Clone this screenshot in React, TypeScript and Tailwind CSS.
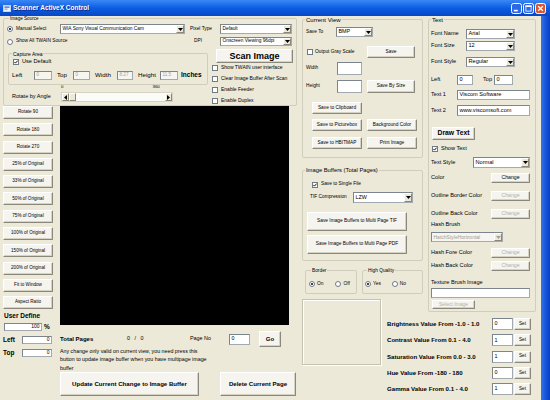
import React from "react";

type Kids = { children?: React.ReactNode; className?: string };

function Btn({ children, className = "", disabled = false }: Kids & { disabled?: boolean }) {
  return (
    <div
      className={`flex shrink-0 items-center justify-center whitespace-nowrap rounded-[1px] border border-t-[#FFFFFF] border-l-[#FFFFFF] border-r-[#8A877B] border-b-[#8A877B] bg-[#F5F4EF] shadow-[inset_-1px_-1px_0_#D5D2C3] ${
        disabled ? "text-[#B4B1A3]" : "text-black"
      } ${className}`}
    >
      {children}
    </div>
  );
}

function Field({
  value = "",
  className = "",
  right = false,
  disabled = false,
}: {
  value?: string;
  className?: string;
  right?: boolean;
  disabled?: boolean;
}) {
  return (
    <div
      className={`flex shrink-0 items-center overflow-hidden whitespace-nowrap border border-[#A3A9B1] border-t-[#7C848D] border-l-[#7C848D] px-[1.5px] ${
        disabled ? "bg-[#F6F5F0] text-[#A3A092]" : "bg-white"
      } ${right ? "justify-end" : ""} ${className}`}
    >
      {value}
    </div>
  );
}

function Drop({ value, className = "", disabled = false }: { value: string; className?: string; disabled?: boolean }) {
  return (
    <div
      className={`flex shrink-0 items-stretch border border-[#A3A9B1] border-t-[#7C848D] border-l-[#7C848D] ${
        disabled ? "bg-[#F6F5F0] text-[#A3A092]" : "bg-white"
      } ${className}`}
    >
      <div className="flex flex-1 items-center overflow-hidden whitespace-nowrap pl-[1.5px]">{value}</div>
      <div className="flex w-[8px] items-center justify-center border border-t-[#FFFFFF] border-l-[#FFFFFF] border-r-[#8A877B] border-b-[#8A877B] bg-[#ECE9D8]">
        <svg width="5" height="3" viewBox="0 0 5 3">
          <path d="M0 0H5L2.5 3Z" fill={disabled ? "#A3A092" : "#000"} />
        </svg>
      </div>
    </div>
  );
}

function Check({ checked = false, className = "" }: { checked?: boolean; className?: string }) {
  return (
    <div className={`flex h-[6px] w-[6px] shrink-0 items-center justify-center border border-[#6F7A86] bg-white ${className}`}>
      {checked && (
        <svg width="4" height="4" viewBox="0 0 4 4">
          <path d="M0.3 1.9L1.5 3.1L3.7 0.6" fill="none" stroke="#111" strokeWidth="1" />
        </svg>
      )}
    </div>
  );
}

function Radio({ checked = false, className = "" }: { checked?: boolean; className?: string }) {
  return (
    <div
      className={`flex h-[6px] w-[6px] shrink-0 items-center justify-center rounded-full border border-[#6F7A86] bg-white ${className}`}
    >
      {checked && <div className="h-[2px] w-[2px] rounded-full bg-black" />}
    </div>
  );
}

function Group({
  title,
  children,
  className = "",
  titleClass = "",
}: Kids & { title: string; titleClass?: string }) {
  return (
    <div className={`relative shrink-0 rounded-[2px] border border-[#D0CDBD] ${className}`}>
      <span className={`absolute top-0 -translate-y-1/2 whitespace-nowrap bg-[#ECE9D8] px-[1px] leading-none ${titleClass}`}>
        {title}
      </span>
      {children}
    </div>
  );
}

function Arrow({ dir }: { dir: "l" | "r" }) {
  return (
    <div className="flex w-[7px] items-center justify-center border border-t-[#FFFFFF] border-l-[#FFFFFF] border-r-[#8A877B] border-b-[#8A877B] bg-[#ECE9D8]">
      <svg width="3" height="5" viewBox="0 0 3 5">
        <path d={dir === "l" ? "M3 0V5L0 2.5Z" : "M0 0V5L3 2.5Z"} fill="#000" />
      </svg>
    </div>
  );
}

function HScroll({ className = "" }: { className?: string }) {
  return (
    <div className={`flex shrink-0 border border-[#D6D3C6] bg-[#FBFBF8] ${className}`}>
      <Arrow dir="l" />
      <div className="w-[7px] border border-t-[#FFFFFF] border-l-[#FFFFFF] border-r-[#8A877B] border-b-[#8A877B] bg-[#ECE9D8]" />
      <div className="flex-1" />
      <Arrow dir="r" />
    </div>
  );
}

function CapButton({ kind }: { kind: "min" | "max" | "close" }) {
  const fill = kind === "close" ? "#DD5630" : "#2D68E6";
  return (
    <svg width="11" height="11" viewBox="0 0 11 11">
      <rect x="0.5" y="0.5" width="10" height="10" rx="2" fill={fill} stroke="#FFFFFF" />
      {kind === "min" && <rect x="2.8" y="6.8" width="4" height="1.6" fill="#FFFFFF" />}
      {kind === "max" && (
        <g>
          <rect x="2.9" y="2.9" width="5.2" height="5.2" fill="none" stroke="#FFFFFF" strokeWidth="0.8" />
          <rect x="2.5" y="2.5" width="6" height="1.5" fill="#FFFFFF" />
        </g>
      )}
      {kind === "close" && <path d="M3.2 3.2L7.8 7.8M7.8 3.2L3.2 7.8" stroke="#FFFFFF" strokeWidth="1.3" />}
    </svg>
  );
}

const SIDE = [
  "Rotate 90",
  "Rotate 180",
  "Rotate 270",
  "25% of Original",
  "33% of Original",
  "50% of Original",
  "75% of Original",
  "100% of Original",
  "150% of Original",
  "200% of Original",
  "Fit to Window",
  "Aspect Ratio",
];

const ADJUST = [
  ["Brightness Value From -1.0 - 1.0", "0"],
  ["Contrast Value From 0.1 - 4.0", "1"],
  ["Saturation Value From 0.0 - 3.0", "1"],
  ["Hue Value From -180 - 180", "0"],
  ["Gamma Value From 0.1 - 4.0", "1"],
];

function ColorRow({ label, disabled = false, className = "" }: { label: string; disabled?: boolean; className?: string }) {
  return (
    <div className={`flex h-[10px] items-center ${className}`}>
      <span className="ml-[2px] w-[60px]">{label}</span>
      <Btn disabled={disabled} className="h-[10px] w-[39px] text-[5.2px]">
        Change
      </Btn>
    </div>
  );
}

export default function App() {
  return (
    <div className="flex h-[400px] w-[550px] flex-col overflow-hidden bg-[#ECE9D8] font-['Liberation_Sans',Arial,sans-serif] leading-none text-black">
      {/* caption */}
      <div className="flex h-[16px] shrink-0 items-center bg-linear-to-b from-[#3A87F4] via-[#0A5DE4] to-[#0847C4]">
        <svg className="ml-[3px]" width="8" height="7" viewBox="0 0 8 7">
          <rect x="0.5" y="0.5" width="7" height="6" fill="#F2F2F2" stroke="#C8D4E8" />
          <rect x="1.5" y="1.5" width="5" height="1.2" fill="#2B5FC8" />
          <rect x="1.5" y="3.6" width="3" height="1" fill="#7A8FB8" />
        </svg>
        <span className="ml-[2px] text-[6.5px] font-bold text-white [text-shadow:1px_1px_0_#0A2A8A]">Scanner ActiveX Control</span>
        <div className="flex-1" />
        <div className="mr-[4px] flex gap-[1px]">
          <CapButton kind="min" />
          <CapButton kind="max" />
          <CapButton kind="close" />
        </div>
      </div>

      <div className="flex flex-1">
        <div className="flex flex-1">
          {/* left area */}
          <div className="flex w-[298px] shrink-0 flex-col text-[4.8px]">
            <Group title="Image Source" className="ml-[3px] mt-[2px] flex h-[88px] w-[294px] flex-col" titleClass="left-[5px] text-[4.6px]">
              <div className="mt-[5px] flex h-[10px] items-center">
                <div className="flex w-[56px] items-center pl-[3px]">
                  <Radio checked />
                  <span className="ml-[3px]">Manual Select</span>
                </div>
                <Drop value="WIA Sony Visual Communication Cam" className="h-[10px] w-[125px]" />
                <span className="ml-[5px] w-[30px]">Pixel Type</span>
                <Drop value="Default" className="h-[10px] w-[72px]" />
              </div>
              <div className="mt-[3px] flex h-[9px] items-center">
                <div className="flex w-[189px] items-center pl-[3px]">
                  <Radio />
                  <span className="ml-[3px]">Show All TWAIN Source</span>
                </div>
                <span className="w-[27px] pl-[1px]">DPI</span>
                <Drop value="Onscreen Viewing 96dpi" className="h-[9px] w-[72px]" />
              </div>
              <div className="flex">
                <div className="flex w-[208px] flex-col">
                  <Group title="Capture Area" className="ml-[4px] mt-[7px] flex h-[32px] w-[200px] flex-col" titleClass="left-[3px] text-[5px]">
                    <div className="mt-[4px] flex h-[7px] items-center pl-[4px]">
                      <Check checked />
                      <span className="ml-[3px] text-[5.6px]">Use Default</span>
                    </div>
                    <div className="mt-[6px] flex h-[9px] items-center pl-[3px] text-[6.2px]">
                      <span className="w-[22px]">Left</span>
                      <Field value="0" disabled className="h-[9px] w-[18px] text-[4.6px]" />
                      <span className="ml-[5px] w-[16px]">Top</span>
                      <Field value="0" disabled className="h-[9px] w-[17px] text-[4.6px]" />
                      <span className="ml-[5px] w-[22px]">Width</span>
                      <Field value="8.27" disabled className="h-[9px] w-[16px] text-[4.6px]" />
                      <span className="ml-[5px] w-[22px]">Height</span>
                      <Field value="11.5" disabled className="h-[9px] w-[18px] text-[4.6px]" />
                      <span className="ml-[3px] text-[6.5px] font-bold">Inches</span>
                    </div>
                  </Group>
                  <div className="flex h-[5px] items-center text-[4.4px]">
                    <span className="ml-[57px]">0</span>
                    <span className="ml-[89px]">360</span>
                  </div>
                  <div className="mt-[2px] flex h-[10px] items-center">
                    <span className="ml-[8px] w-[49px] text-[5.5px]">Rotate by Angle</span>
                    <HScroll className="h-[10px] w-[112px]" />
                  </div>
                </div>
                <div className="flex flex-col">
                  <Btn className="ml-[4px] mt-[3px] h-[14px] w-[77px] text-[9px] font-bold">Scan Image</Btn>
                  <div className="flex flex-col gap-[2px]">
                    {["Show TWAIN user interface", "Clear Image Buffer After Scan", "Enable Feeder", "Enable Duplex"].map((s) => (
                      <div key={s} className="flex h-[9px] items-center">
                        <Check />
                        <span className="ml-[3px] text-[5px]">{s}</span>
                      </div>
                    ))}
                  </div>
                </div>
              </div>
            </Group>

            <div className="flex">
              <div className="ml-[3px] flex w-[50px] shrink-0 flex-col">
                <div className="flex flex-col gap-[4.3px] text-[4.6px]">
                  {SIDE.map((s) => (
                    <Btn key={s} className="h-[13px] w-[50px]">
                      {s}
                    </Btn>
                  ))}
                </div>
                <span className="ml-[1px] mt-[4px] text-[6.5px] font-bold">User Define</span>
                <div className="mt-[3px] flex h-[8px] items-center">
                  <Field value="100" right className="ml-[1px] h-[8px] w-[38px] text-[5px]" />
                  <span className="ml-[2px] text-[6.5px] font-bold">%</span>
                </div>
                <div className="mt-[5px] flex h-[8px] items-center text-[6.5px] font-bold">
                  <span className="w-[19px]">Left</span>
                  <Field value="0" right className="h-[8px] w-[30px] text-[5px] font-normal" />
                </div>
                <div className="mt-[5px] flex h-[8px] items-center text-[6.5px] font-bold">
                  <span className="w-[19px]">Top</span>
                  <Field value="0" right className="h-[8px] w-[30px] text-[5px] font-normal" />
                </div>
              </div>

              <div className="ml-[7px] flex w-[236px] shrink-0 flex-col text-[5.3px]">
                <div className="h-[219px] w-[229px] bg-black" />
                <div className="mt-[6px] flex h-[16px] items-center">
                  <span className="w-[67px] text-[6px] font-bold">Total Pages</span>
                  <span className="w-[63px] whitespace-pre text-[5.4px]">0   /   0</span>
                  <span className="w-[39px] text-[5.4px]">Page No</span>
                  <Field value="0" className="h-[11px] w-[21px]" />
                  <Btn className="ml-[9px] h-[16px] w-[22px] text-[6px] font-bold">Go</Btn>
                </div>
                <p className="leading-[8.3px]">
                  Any change only valid on current view, you need press this
                  <br />
                  button to update image buffer when you have multipage image
                  <br />
                  buffer
                </p>
                <div className="flex h-[24px]">
                  <Btn className="h-[24px] w-[139px] text-[6.1px] font-bold">Update Current Change to Image Buffer</Btn>
                  <Btn className="ml-[21px] h-[24px] w-[76px] text-[6.1px] font-bold">Delete Current Page</Btn>
                </div>
              </div>
            </div>
          </div>

          {/* middle and right area */}
          <div className="ml-[4px] grid grid-cols-[85px_41px_108px] grid-rows-[283px_13px_88px]">
            <div className="col-span-2 col-start-1 row-start-1 flex w-[121px] flex-col text-[4.8px]">
              <Group title="Current View" className="mt-[3px] flex h-[139px] w-[121px] flex-col" titleClass="left-[2px] text-[6px]">
                <div className="mt-[7px] flex h-[10px] items-center">
                  <span className="ml-[3px] w-[30px]">Save To</span>
                  <Drop value="BMP" className="h-[10px] w-[37px] text-[5.4px]" />
                </div>
                <div className="mt-[9px] flex h-[12px] items-center">
                  <div className="flex w-[64px] items-center pl-[4px]">
                    <Check />
                    <span className="ml-[2px]">Output Gray Scale</span>
                  </div>
                  <Btn className="h-[12px] w-[48px]">Save</Btn>
                </div>
                <div className="mt-[4px] flex h-[13px] items-center">
                  <span className="ml-[3px] w-[31px]">Width</span>
                  <Field className="h-[13px] w-[25px]" />
                </div>
                <div className="mt-[4px] flex h-[14px] items-center">
                  <span className="ml-[3px] w-[31px]">Height</span>
                  <Field className="h-[13px] w-[25px]" />
                  <Btn className="ml-[5px] h-[13px] w-[48px]">Save By Size</Btn>
                </div>
                <div className="mt-[9px] flex h-[12px] items-center">
                  <Btn className="ml-[9px] h-[12px] w-[50px]">Save to Clipboard</Btn>
                </div>
                <div className="mt-[5px] flex h-[12px] items-center">
                  <Btn className="ml-[9px] h-[12px] w-[50px]">Save to Picturebox</Btn>
                  <Btn className="ml-[5px] h-[12px] w-[50px]">Background Color</Btn>
                </div>
                <div className="mt-[6px] flex h-[12px] items-center">
                  <Btn className="ml-[9px] h-[12px] w-[50px]">Save to HBITMAP</Btn>
                  <Btn className="ml-[5px] h-[12px] w-[50px]">Print Image</Btn>
                </div>
              </Group>

              <Group title="Image Buffers (Total Pages)" className="mt-[12px] flex h-[91px] w-[121px] flex-col" titleClass="left-[2px] text-[5.8px]">
                <div className="mt-[10px] flex h-[7px] items-center pl-[9px]">
                  <Check checked />
                  <span className="ml-[3px]">Save to Single File</span>
                </div>
                <div className="mt-[4px] flex h-[11px] items-center">
                  <span className="ml-[7px] w-[43px]">TIF Compression</span>
                  <Drop value="LZW" className="h-[11px] w-[60px] text-[5.4px]" />
                </div>
                <Btn className="ml-[4px] mt-[9px] h-[19px] w-[100px]">Save Image Buffers to Multi Page TIF</Btn>
                <Btn className="ml-[4px] mt-[4px] h-[19px] w-[100px]">Save Image Buffers to Multi Page PDF</Btn>
              </Group>

              <div className="mt-[9px] flex h-[24px]">
                <Group title="Border" className="ml-[3px] flex h-[24px] w-[52px] flex-col" titleClass="left-[5px] text-[4.8px]">
                  <div className="mt-[9px] flex h-[8px] items-center">
                    <Radio checked className="ml-[3px]" />
                    <span className="ml-[2px]">On</span>
                    <Radio className="ml-[12px]" />
                    <span className="ml-[2px]">Off</span>
                  </div>
                </Group>
                <Group title="High Quality" className="ml-[5px] flex h-[24px] w-[61px] flex-col" titleClass="left-[4px] text-[4.8px]">
                  <div className="mt-[9px] flex h-[8px] items-center">
                    <Radio checked className="ml-[2px]" />
                    <span className="ml-[2px]">Yes</span>
                    <Radio className="ml-[11px]" />
                    <span className="ml-[2px]">No</span>
                  </div>
                </Group>
              </div>
            </div>

            <Group
              title="Text"
              className="col-start-3 row-span-2 row-start-1 mt-[3px] flex h-[293px] w-[108px] flex-col self-start text-[5.6px]"
              titleClass="left-[2px] text-[6px]"
            >
              <div className="mt-[9px] flex h-[10px] items-center">
                <span className="ml-[2px] w-[35px]">Font Name</span>
                <Drop value="Arial" className="h-[10px] w-[49px]" />
              </div>
              <div className="mt-[2px] flex h-[10px] items-center">
                <span className="ml-[2px] w-[35px]">Font Size</span>
                <Drop value="12" className="h-[10px] w-[49px]" />
              </div>
              <div className="mt-[6px] flex h-[10px] items-center">
                <span className="ml-[2px] w-[35px]">Font Style</span>
                <Drop value="Regular" className="h-[10px] w-[49px]" />
              </div>
              <div className="mt-[8px] flex h-[10px] items-center">
                <span className="ml-[2px] w-[26px]">Left</span>
                <Field value="0" className="h-[10px] w-[16px]" />
                <span className="ml-[10px] w-[11px]">Top</span>
                <Field value="0" className="h-[10px] w-[19px]" />
              </div>
              <div className="mt-[5px] flex h-[10px] items-center">
                <span className="ml-[2px] w-[26px]">Text 1</span>
                <Field value="Viscom Software" className="h-[10px] w-[73px]" />
              </div>
              <div className="mt-[5px] flex h-[11px] items-center">
                <span className="ml-[2px] w-[26px]">Text 2</span>
                <Field value="www.viscomsoft.com" className="h-[11px] w-[73px]" />
              </div>
              <Btn className="ml-[3px] mt-[11px] h-[13px] w-[43px] text-[6.8px] font-bold">Draw Text</Btn>
              <div className="mt-[6px] flex h-[6px] items-center">
                <Check checked className="ml-[3px]" />
                <span className="ml-[3px]">Show Text</span>
              </div>
              <div className="mt-[5px] flex h-[11px] items-center">
                <span className="ml-[2px] w-[42px]">Text Style</span>
                <Drop value="Normal" className="h-[11px] w-[57px]" />
              </div>
              <ColorRow label="Color" className="mt-[5px]" />
              <ColorRow label="Outline Border Color" disabled className="mt-[8px]" />
              <ColorRow label="Outline Back Color" disabled className="mt-[8px]" />
              <span className="ml-[2px] mt-[3px] flex h-[6px] items-center">Hash Brush</span>
              <Drop value="HatchStyleHorizontal" disabled className="ml-[2px] mt-[4px] h-[10px] w-[72px] text-[5px]" />
              <ColorRow label="Hash Fore Color" disabled className="mt-[6px]" />
              <ColorRow label="Hash Back Color" disabled className="mt-[3px]" />
              <span className="ml-[2px] mt-[9px] flex h-[6px] items-center">Texture Brush Image</span>
              <Field className="ml-[2px] mt-[2px] h-[10px] w-[99px]" />
              <Btn disabled className="ml-[3px] mt-[2px] h-[9px] w-[43px] text-[5px]">
                Select Image
              </Btn>
            </Group>

            <div className="col-start-1 row-span-2 row-start-2 h-[66px] w-[79px] self-start border border-[#C5C2B2] shadow-[1px_1px_0_#FFFFFF,inset_1px_1px_0_#FFFFFF]" />

            <div className="col-span-2 col-start-2 row-start-3 flex flex-col gap-[4.3px] pt-[6px]">
              {ADJUST.map(([label, v]) => (
                <div key={label} className="flex h-[12px] items-center">
                  <span className="w-[105px] text-[6.1px] font-bold">{label}</span>
                  <Field value={v} className="h-[12px] w-[21px] text-[5.4px]" />
                  <Btn className="ml-[1px] h-[12px] w-[17px] text-[4.6px]">Set</Btn>
                </div>
              ))}
            </div>
          </div>
        </div>
        <div className="w-[9px] shrink-0 bg-linear-to-r from-[#3573EA] via-[#1656DC] to-[#0A3EC2]" />
      </div>
    </div>
  );
}
